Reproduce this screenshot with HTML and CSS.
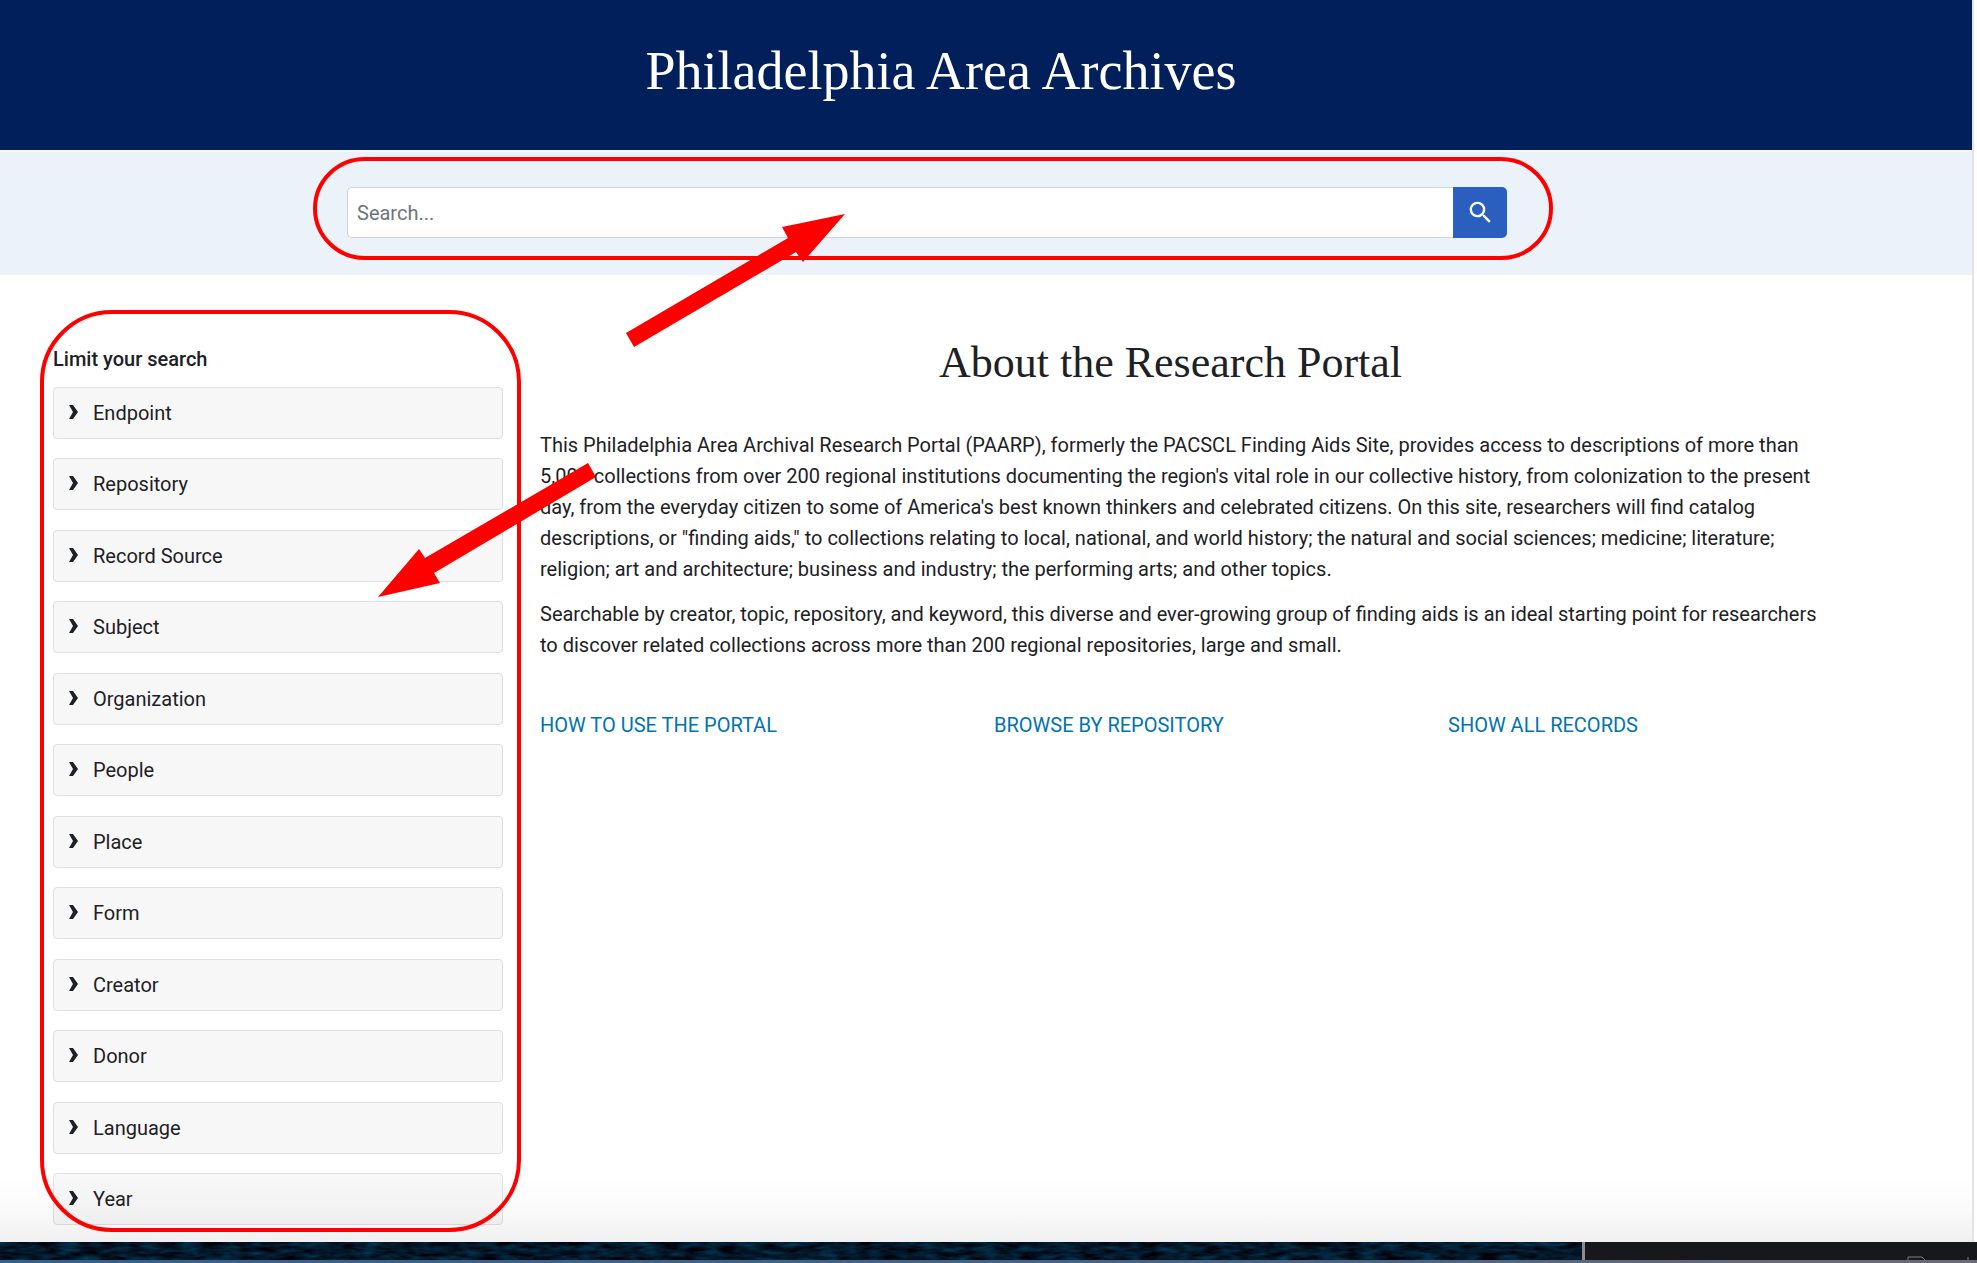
FILE: index.html
```html
<!DOCTYPE html>
<html lang="en">
<head>
<meta charset="utf-8">
<title>Philadelphia Area Archives</title>
<link rel="stylesheet" href="styles.css">
</head>
<body>
<div class="window">
  <div class="page">
    <header class="masthead"><h1 class="masthead-title">Philadelphia Area Archives</h1></header>
    <div class="search-band">
      <form class="search-form" role="search">
        <input class="search-input" type="search" placeholder="Search..." aria-label="Search">
        <button class="search-button" type="button" aria-label="Search">
          <svg width="29" height="29" viewBox="0 0 24 24" fill="currentColor"><path d="M15.5 14h-.79l-.28-.27A6.47 6.47 0 0 0 16 9.5 6.5 6.5 0 1 0 9.500 16c1.610 0 3.090-.59 4.230-1.570l.27.28v.79l5 4.990L20.490 19l-4.990-5zm-6 0C7.010 14 5 11.990 5 9.500S7.010 5 9.500 5 14 7.010 14 9.500 11.990 14 9.500 14z"/></svg>
        </button>
      </form>
    </div>
    <div class="content">
      <aside class="facets">
        <h2 class="facets-title">Limit your search</h2>
        <div class="facet-list">
          <button class="facet" type="button"><svg class="chevron" viewBox="0 0 10 14"><path d="M0 0h4l5 7-5 7H0l4-7z"/></svg>Endpoint</button>
          <button class="facet" type="button"><svg class="chevron" viewBox="0 0 10 14"><path d="M0 0h4l5 7-5 7H0l4-7z"/></svg>Repository</button>
          <button class="facet" type="button"><svg class="chevron" viewBox="0 0 10 14"><path d="M0 0h4l5 7-5 7H0l4-7z"/></svg>Record Source</button>
          <button class="facet" type="button"><svg class="chevron" viewBox="0 0 10 14"><path d="M0 0h4l5 7-5 7H0l4-7z"/></svg>Subject</button>
          <button class="facet" type="button"><svg class="chevron" viewBox="0 0 10 14"><path d="M0 0h4l5 7-5 7H0l4-7z"/></svg>Organization</button>
          <button class="facet" type="button"><svg class="chevron" viewBox="0 0 10 14"><path d="M0 0h4l5 7-5 7H0l4-7z"/></svg>People</button>
          <button class="facet" type="button"><svg class="chevron" viewBox="0 0 10 14"><path d="M0 0h4l5 7-5 7H0l4-7z"/></svg>Place</button>
          <button class="facet" type="button"><svg class="chevron" viewBox="0 0 10 14"><path d="M0 0h4l5 7-5 7H0l4-7z"/></svg>Form</button>
          <button class="facet" type="button"><svg class="chevron" viewBox="0 0 10 14"><path d="M0 0h4l5 7-5 7H0l4-7z"/></svg>Creator</button>
          <button class="facet" type="button"><svg class="chevron" viewBox="0 0 10 14"><path d="M0 0h4l5 7-5 7H0l4-7z"/></svg>Donor</button>
          <button class="facet" type="button"><svg class="chevron" viewBox="0 0 10 14"><path d="M0 0h4l5 7-5 7H0l4-7z"/></svg>Language</button>
          <button class="facet" type="button"><svg class="chevron" viewBox="0 0 10 14"><path d="M0 0h4l5 7-5 7H0l4-7z"/></svg>Year</button>
        </div>
      </aside>
      <main class="about">
        <div class="about-text">
          <h2 class="about-title">About the Research Portal</h2>
          <p>This Philadelphia Area Archival Research Portal (PAARP), formerly the PACSCL Finding Aids Site, provides access to descriptions of more than 5,000 collections from over 200 regional institutions documenting the region's vital role in our collective history, from colonization to the present day, from the everyday citizen to some of America's best known thinkers and celebrated citizens. On this site, researchers will find catalog descriptions, or "finding aids," to collections relating to local, national, and world history; the natural and social sciences; medicine; literature; religion; art and architecture; business and industry; the performing arts; and other topics.</p>
          <p>Searchable by creator, topic, repository, and keyword, this diverse and ever-growing group of finding aids is an ideal starting point for researchers to discover related collections across more than 200 regional repositories, large and small.</p>
        </div>
        <nav class="links">
          <a href="#">HOW TO USE THE PORTAL</a>
          <a href="#">BROWSE BY REPOSITORY</a>
          <a href="#">SHOW ALL RECORDS</a>
        </nav>
      </main>
    </div>
    <div class="fade"></div>
  </div>
  <footer class="desktop">
    <svg class="sea" preserveAspectRatio="none" aria-hidden="true">
      <filter id="waves" x="0" y="0" width="100%" height="100%" color-interpolation-filters="sRGB">
        <feTurbulence type="fractalNoise" baseFrequency="0.05 0.2" numOctaves="3" seed="4"/>
        <feColorMatrix values="0 0 0 0 .01  .35 0 0 0 -.08  .45 0 0 0 -.06  0 0 0 0 1"/>
      </filter>
      <rect width="100%" height="18" filter="url(#waves)"/>
    </svg>
    <div class="dock">
      <svg class="dock-icon" width="64" height="4" viewBox="0 0 64 4" fill="none" stroke="#7d7e83"><path d="M1 4V1h14l3 3M61 1v3"/></svg>
    </div>
  </footer>
</div>
<svg class="markup" width="1977" height="1263" viewBox="0 0 1977 1263" aria-hidden="true">
  <g fill="none" stroke="#f00" stroke-width="4">
    <rect x="315" y="159" width="1236" height="99" rx="50"/>
    <rect x="42" y="312" width="477" height="918" rx="70"/>
  </g>
  <g fill="#f00">
    <path d="M845 214 782 227 788 238 626 333 634 347 796 252 803 262z"/>
    <path d="M378 597 440 583 434 573 596 477 588 463 425 558 419 549z"/>
  </g>
</svg>
</body>
</html>
```
FILE: styles.css
```css
* { box-sizing: border-box; }

body {
  margin: 0;
  position: relative;
  background: #fff;
  color: #1d2125;
  font: 20px/31px Roboto, "Liberation Sans", sans-serif;
}

.window {
  display: flex;
  flex-direction: column;
  min-height: 100vh;
}

.page {
  position: relative;
  flex: 1;
  margin-right: 3px;
  border-right: 2px solid #e4e4e4;
}

.masthead {
  height: 152px;
  padding: 37px 90px 0 0;
  background: #011f5b;
  border-bottom: 2px solid #f5f7fb;
  color: #fff;
  text-align: center;
}

.masthead-title {
  margin: 0;
  font: 400 54px/68px "Liberation Serif", serif;
}

.search-band {
  padding: 35px 24px 37px 347px;
  background: #ebf2f9;
}

.search-form {
  display: flex;
  max-width: 1160px;
}

.search-input {
  flex: 1;
  min-width: 0;
  height: 51px;
  padding: 0 9px;
  border: 1px solid #ced4da;
  border-right: 0;
  border-radius: 5px 0 0 5px;
  background: #fff;
  color: inherit;
  font: inherit;
}

.search-input::placeholder { color: #6c757d; opacity: 1; }

.search-button {
  display: grid;
  place-items: center;
  width: 54px;
  padding: 0;
  border: 0;
  border-radius: 0 5px 5px 0;
  background: #2a5fc0;
  color: #fff;
}

.content {
  display: grid;
  grid-template-columns: 450px minmax(0, 1fr);
  gap: 37px;
  padding: 69px 108px 17px 53px;
}

.facets-title {
  margin: 0 0 12px;
  font: 500 20px/31px Roboto, "Liberation Sans", sans-serif;
}

.facet-list {
  display: flex;
  flex-direction: column;
}

.facet {
  display: flex;
  align-items: center;
  gap: 14px;
  height: 52px;
  margin-bottom: 19px;
  padding: 0 15px;
  border: 1px solid #dfdfdf;
  border-radius: 4px;
  background: #f7f7f7;
  color: inherit;
  font: inherit;
  text-align: left;
}

.facet:nth-child(even) { margin-bottom: 20px; }
.facet:last-child { margin-bottom: 0; }

.chevron {
  width: 10px;
  height: 14px;
  margin-bottom: 3px;
  fill: #1d2125;
}

.about-text { max-width: 1285px; }

.about-title {
  max-width: 1261px;
  margin: 0 0 49px;
  font: 400 44px/37px "Liberation Serif", serif;
  text-align: center;
}

.about p { margin: 0 0 14px; }

.links {
  display: grid;
  grid-template-columns: repeat(3, 1fr);
  gap: 38px;
  margin-top: 49px;
}

.links a {
  color: #0073b3;
  text-decoration: none;
}

.fade {
  position: absolute;
  inset: auto 0 0 0;
  height: 64px;
  background: linear-gradient(rgba(0, 0, 0, 0), rgba(0, 0, 0, .02) 50%, rgba(0, 0, 0, .06));
}

.desktop {
  display: flex;
  height: 21px;
  border-bottom: 3px solid;
  border-image: linear-gradient(90deg, #35608c, #4a6484 70%, #6b6975 90%) 1;
  border-image-width: 0 0 3px;
  background: #17181c;
}

.sea {
  flex: 1;
  min-width: 0;
  height: 18px;
  background: #04192b;
}

.dock {
  display: flex;
  align-items: flex-end;
  justify-content: flex-end;
  width: 395px;
  padding-right: 6px;
  border-left: 3px solid #8c8c8c;
  background: #17181c;
}

.dock-icon { display: block; }

.markup {
  position: absolute;
  top: 0;
  left: 0;
  pointer-events: none;
}
```
